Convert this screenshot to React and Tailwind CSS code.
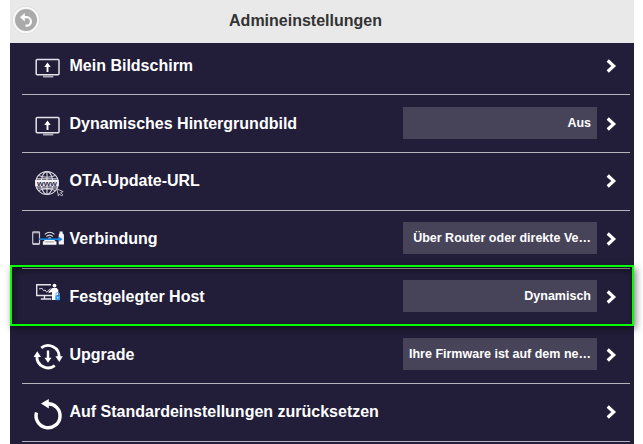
const ScreenIcon = ({ y }) => (
  <g fill="none" stroke="#e4e3ea">
    <rect x="36.2" y={y} width="22.8" height="15.2" rx="1" strokeWidth="1.5" />
    <path d={`M47.5 ${y + 12.5}V${y + 4.5}`} strokeWidth="1.9" stroke="#fff" />
    <path d={`M44.3 ${y + 7.4}L47.5 ${y + 3}L50.7 ${y + 7.4}Z`} fill="#fff" stroke="none" />
    <path d={`M43 ${y + 17}h10.3`} strokeWidth="2" stroke="#aaa8b5" />
  </g>
)

const GlobeIcon = () => (
  <g>
    <g fill="none" stroke="#d6d5dd" strokeWidth="1.1">
      <circle cx="47" cy="183" r="11.4" />
      <ellipse cx="47" cy="183" rx="5.8" ry="11.4" />
      <path d="M47 171.5v23M38.5 175.5q8.5 3.5 17 0M38.5 190.5q8.5-3.5 17 0M36.5 178.7h21M36.5 188h21" />
    </g>
    <rect x="35.2" y="179.8" width="23.4" height="6.8" rx="1" fill="#f2f1f5" />
    <text x="37" y="185.5" textLength="20" lengthAdjust="spacingAndGlyphs" fontSize="8" fontWeight="700" fill="#35314c">www</text>
    <path d="M57 189l6.2 2.6-2.6 1 2.2 2.3-1.2 1.2-2.2-2.3-1 2.2z" fill="#221d39" stroke="#c9c7d2" strokeWidth=".9" />
  </g>
)

const ConnectionIcon = () => (
  <g>
    <rect x="32.7" y="231.8" width="6.8" height="12.6" rx=".8" fill="none" stroke="#c9c7d2" strokeWidth="1.2" />
    <path d="M33 232.8h6M33 243.4h6" stroke="#c9c7d2" />
    <path d="M44.8 234.4q4.8-4.2 9.6 0M46.4 236.5q3.2-2.8 6.4 0M48.1 238.4q1.5-1.3 3 0" fill="none" stroke="#e0dfe6" strokeWidth="1.1" />
    <path d="M44.3 239.5l.9 3h8.8l.9-3M43.2 241.6h13v3h-13z" fill="#fff" stroke="#fff" strokeWidth=".5" />
    <path d="M59.6 231.5h3v1.8q1.3.7 1.3 2v9.3h-5.2v-9.3q0-1.3.9-2z" fill="#f5f5f8" />
    <path d="M39 239.2h21" stroke="#1688e6" strokeWidth="1.6" />
    <path d="M59.2 236.7l3.4 2.5-3.4 2.5z" fill="#1688e6" />
  </g>
)

const HostIcon = () => (
  <g>
    <path d="M51 284.8H36.7v10.7H52M44.5 295.5v3M40.8 299h10.5" fill="none" stroke="#e4e3ea" strokeWidth="1.4" />
    <path d="M39 289l3-.7 1.5 2.4 1.6-.7 1.5 2.2 4-3.8" fill="none" stroke="#d6d5dd" />
    <circle cx="54.5" cy="285.6" r="1.9" fill="#fff" />
    <path d="M52.3 288h4.4l1.6 2.1v5H57v4.8h-5v-8l-3.2 1-.4-1.2z" fill="#fff" />
    <path d="M56 295.3v-1.4q0-1.4 1.7-1.4t1.7 1.4v1.4" fill="none" stroke="#55aaf0" />
    <rect x="55.3" y="295.2" width="4.7" height="5.1" rx=".7" fill="#2e9bee" />
    <path d="M57.7 296.8v1.8" stroke="#fff" strokeWidth=".8" />
  </g>
)

const UpgradeIcon = () => (
  <g>
    <g fill="none" stroke="#fff" strokeWidth="2.8">
      <path d="M41.2 347.8A11.2 11.2 0 0 1 59.2 357" />
      <path d="M54.8 365.6A11.2 11.2 0 0 1 36.9 356" />
      <path d="M48 350.5v8.5" strokeWidth="2.4" />
    </g>
    <path d="M55.4 356.3h7.4l-3.5 5.6zM33.6 357h7.4l-3.8-5.8zM44.5 357.8h7l-3.5 5z" fill="#fff" />
  </g>
)

const ResetIcon = () => (
  <g>
    <path d="M36.5 412.5A12 12 0 1 0 47.5 403.8" fill="none" stroke="#fff" strokeWidth="3.4" />
    <path d="M41 403.5l7.8-4.6v9.6z" fill="#fff" />
  </g>
)

const rows = [
  { label: 'Mein Bildschirm', top: 43, chevron: 66, height: 'h-[52px]', pad: 'pt-[13px]', icon: <ScreenIcon y={59.5} /> },
  { label: 'Dynamisches Hintergrundbild', value: 'Aus', top: 95, chevron: 124, height: 'h-[58px]', pad: 'pt-[19px]', box: 'mt-[12px]', icon: <ScreenIcon y={117.5} /> },
  { label: 'OTA-Update-URL', top: 153, chevron: 181, height: 'h-[58px]', pad: 'pt-[18px]', icon: <GlobeIcon /> },
  { label: 'Verbindung', value: 'Über Router oder direkte Ve…', top: 211, chevron: 239, height: 'h-[58px]', pad: 'pt-[18px]', box: 'mt-[11px]', icon: <ConnectionIcon /> },
  { label: 'Festgelegter Host', value: 'Dynamisch', top: 269, chevron: 297, height: 'h-[57px]', pad: 'pt-[18px]', box: 'mt-[11px]', icon: <HostIcon />, selected: true },
  { label: 'Upgrade', value: 'Ihre Firmware ist auf dem ne…', top: 326, chevron: 355, height: 'h-[58px]', pad: 'pt-[19px]', box: 'mt-[12px]', icon: <UpgradeIcon /> },
  { label: 'Auf Standardeinstellungen zurücksetzen', top: 384, chevron: 412, height: 'h-[58px]', pad: 'pt-[18px]', icon: <ResetIcon /> },
]

function Row({ row }) {
  return (
    <li className={`relative flex items-start border-b border-[#b5b3bc] ${row.height}`}>
      <svg className="h-[57px] w-[47.5px] shrink-0" viewBox={`22 ${row.top} 47.5 57`}>{row.icon}</svg>
      <span className={`flex-1 whitespace-nowrap text-[16px] leading-5 text-white ${row.pad}`}>{row.label}</span>
      {row.value && (
        <span className={`h-8 w-[194px] shrink-0 whitespace-nowrap bg-[#474359] pr-[6px] text-right text-[12.5px] leading-[32px] text-white ${row.box}`}>
          {row.value}
        </span>
      )}
      <svg className="h-[57px] w-[33px] shrink-0" viewBox={`597 ${row.top} 33 57`}>
        <path d={`M607.7 ${row.chevron - 5.5}l6 5.5-6 5.5`} fill="none" stroke="#fff" strokeWidth="3.2" />
      </svg>
      {row.selected && (
        <div className="pointer-events-none absolute -left-3 -right-1 -top-1 z-10 h-[61px] border-2 border-[#00ff00] shadow-[2px_3px_7px_rgba(0,0,0,0.5),inset_2px_3px_7px_rgba(0,0,0,0.45)]" />
      )}
    </li>
  )
}

export default function App() {
  return (
    <div className="h-[444px] w-[643px] overflow-hidden bg-white pl-[10px] font-['Liberation_Sans',Arial,sans-serif] font-bold">
      <div className="flex h-full w-[624px] flex-col bg-[#221d39]">
        <header className="flex h-[43px] shrink-0 items-start bg-[#e9e9e9]">
          <button className="ml-[2px] mt-[6px] h-7 w-7" aria-label="Zurück">
            <svg className="h-7 w-7" viewBox="12 6 28 28">
              <circle cx="26" cy="20" r="14" fill="#dcdcdc" />
              <circle cx="26" cy="20" r="13.3" fill="#f7f7f7" />
              <circle cx="26" cy="20" r="11" fill="#aaa" />
              <path d="M23 17.2h3.7a4.2 4.2 0 0 1 0 8.4h-1.2" fill="none" stroke="#fff" strokeWidth="2.2" />
              <path d="M20 17.2l4.8-4.2v8.4z" fill="#fff" />
            </svg>
          </button>
          <h1 className="flex-1 pr-[63px] pt-[11px] text-center text-[16px] leading-5 text-[#333]">Admineinstellungen</h1>
        </header>
        <ul className="ml-3 mr-1">
          {rows.map((row) => <Row key={row.label} row={row} />)}
        </ul>
      </div>
    </div>
  )
}
